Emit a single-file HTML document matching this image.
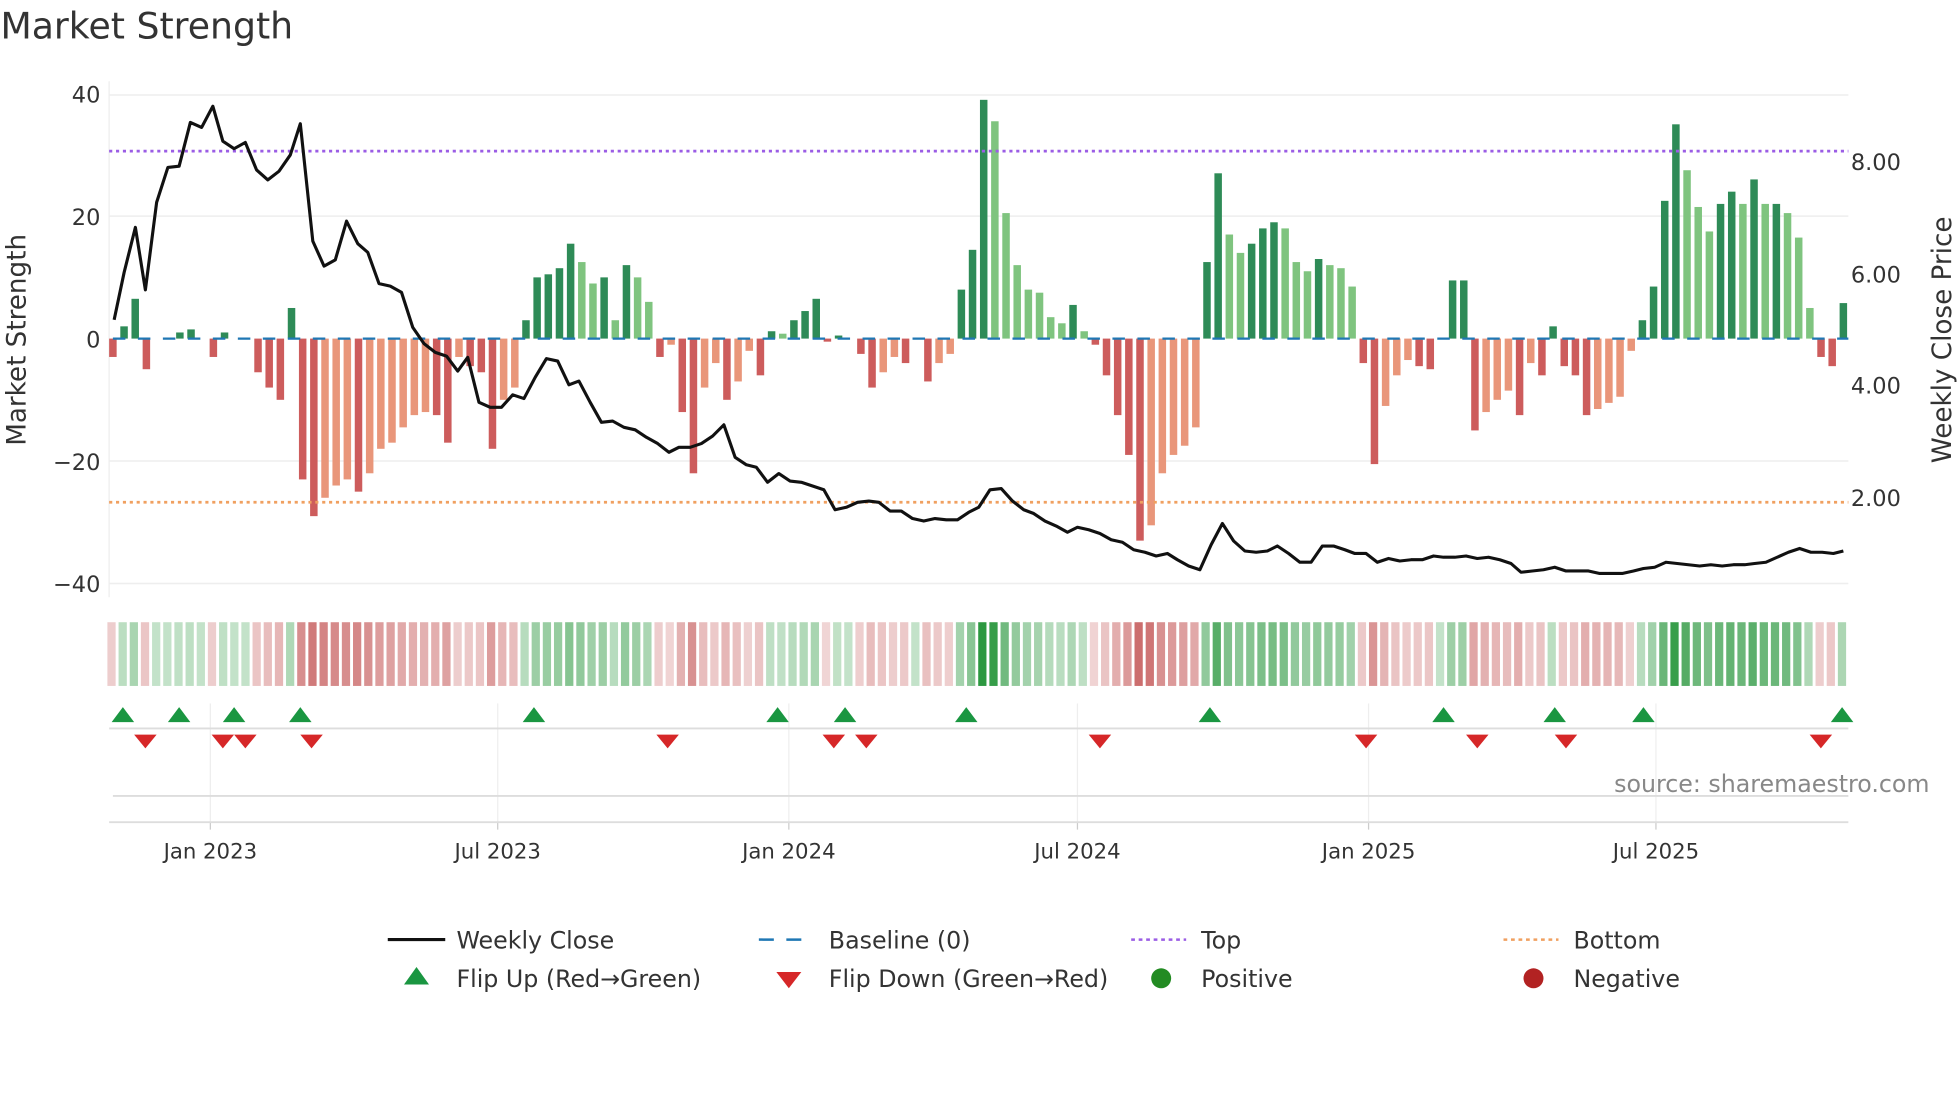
<!DOCTYPE html>
<html><head><meta charset="utf-8">
<style>
html,body{margin:0;padding:0;background:#fff;}
svg{display:block;font-family:"DejaVu Sans","Liberation Sans",sans-serif;}
</style></head>
<body>
<svg id="s" width="1960" height="1102" viewBox="0 0 1568 882" xmlns="http://www.w3.org/2000/svg">
<rect width="1568" height="882" fill="#fff"/>
<text x="0" y="31" font-size="29" fill="#333">Market Strength</text>
<g id="grid"></g>
<g id="heat"></g>
<g id="bars"></g>
<line x1="87" y1="121" x2="1479" y2="121" stroke="#9b5de5" stroke-width="2.2" stroke-dasharray="2.5,3"/>
<line x1="87" y1="402" x2="1479" y2="402" stroke="#f0a060" stroke-width="2.2" stroke-dasharray="2.5,3"/>
<polyline id="price" fill="none" stroke="#111" stroke-width="2.5" stroke-linejoin="round"/>
<g id="marks"></g>
<g font-size="18" fill="#333" text-anchor="end">
<text x="80" y="82">40</text><text x="80" y="180">20</text><text x="80" y="278">0</text>
<text x="80" y="376">−20</text><text x="80" y="474">−40</text>
</g>
<g font-size="18" fill="#333">
<text x="1481" y="136">8.00</text><text x="1481" y="226">6.00</text>
<text x="1481" y="315">4.00</text><text x="1481" y="405">2.00</text>
</g>
<text transform="translate(20,272) rotate(-90)" font-size="21" fill="#333" text-anchor="middle">Market Strength</text>
<text transform="translate(1561,272) rotate(-90)" font-size="21" fill="#333" text-anchor="middle">Weekly Close Price</text>
<g font-size="17" fill="#333" text-anchor="middle">
<text x="168" y="687">Jan 2023</text><text x="398" y="687">Jul 2023</text>
<text x="631" y="687">Jan 2024</text><text x="862" y="687">Jul 2024</text>
<text x="1095" y="687">Jan 2025</text><text x="1325" y="687">Jul 2025</text>
</g>
<text x="1544" y="634" font-size="19" fill="#888" text-anchor="end">source: sharemaestro.com</text>
<g font-size="19" fill="#333">
<line x1="310" y1="752" x2="356" y2="752" stroke="#111" stroke-width="2.5"/>
<text x="365" y="759">Weekly Close</text>
<line x1="607" y1="752" x2="651" y2="752" stroke="#1f77b4" stroke-width="2" stroke-dasharray="12,10"/>
<text x="663" y="759">Baseline (0)</text>
<line x1="905" y1="752" x2="949" y2="752" stroke="#9b5de5" stroke-width="2" stroke-dasharray="3,3"/>
<text x="961" y="759">Top</text>
<line x1="1203" y1="752" x2="1247" y2="752" stroke="#f0a060" stroke-width="2" stroke-dasharray="3,3"/>
<text x="1259" y="759">Bottom</text>
<polygon points="323,788 343,788 333,774" fill="#1a9641"/>
<text x="365" y="790">Flip Up (Red→Green)</text>
<polygon points="621,778 641,778 631,791" fill="#d62728"/>
<text x="663" y="790">Flip Down (Green→Red)</text>
<circle cx="929" cy="783" r="8" fill="#228b22"/>
<text x="961" y="790">Positive</text>
<circle cx="1227" cy="783" r="8" fill="#b22222"/>
<text x="1259" y="790">Negative</text>
</g>
</svg>
<script>
var NS="http://www.w3.org/2000/svg";
function el(p,t,a){var e=document.createElementNS(NS,t);for(var k in a)e.setAttribute(k,a[k]);document.getElementById(p).appendChild(e);return e;}
[76,173,369,467].forEach(function(y){el("grid","line",{x1:87,y1:y,x2:1479,y2:y,stroke:"#eee","stroke-width":1.2});});
el("grid","line",{x1:87,y1:65,x2:87,y2:478,stroke:"#eee","stroke-width":1});
[168,398,631,862,1095,1325].forEach(function(x){
 el("grid","line",{x1:x,y1:563,x2:x,y2:658,stroke:"#eee","stroke-width":1});
 el("grid","line",{x1:x,y1:658,x2:x,y2:664,stroke:"#ccc","stroke-width":1});
});
el("grid","line",{x1:87,y1:583,x2:1479,y2:583,stroke:"#ddd","stroke-width":1.5});
el("grid","line",{x1:90,y1:637,x2:1479,y2:637,stroke:"#ddd","stroke-width":1.5});
el("grid","line",{x1:87,y1:658,x2:1479,y2:658,stroke:"#ddd","stroke-width":1.5});
var v=[-3,2,6.5,-5,0,0,1,1.5,0,-3,1,0,0,-5.5,-8,-10,5,-23,-29,-26,-24,-23,-25,-22,-18,-17,-14.5,-12.5,-12,-12.5,-17,-3,-4.5,-5.5,-18,-10,-8,3,10,10.5,11.5,15.5,12.5,9,10,3,12,10,6,-3,-1,-12,-22,-8,-4,-10,-7,-2,-6,1.2,0.8,3,4.5,6.5,-0.5,0.5,0,-2.5,-8,-5.5,-3,-4,0,-7,-4,-2.5,8,14.5,39,35.5,20.5,12,8,7.5,3.5,2.5,5.5,1.2,-1,-6,-12.5,-19,-33,-30.5,-22,-19,-17.5,-14.5,12.5,27,17,14,15.5,18,19,18,12.5,11,13,12,11.5,8.5,-4,-20.5,-11,-6,-3.5,-4.5,-5,0,9.5,9.5,-15,-12,-10,-8.5,-12.5,-4,-6,2,-4.5,-6,-12.5,-11.5,-10.5,-9.5,-2,3,8.5,22.5,35,27.5,21.5,17.5,22,24,22,26,22,22,20.5,16.5,5,-3,-4.5,5.8];
var n=v.length,step=(1475-90)/(n-1),Y0=271,k=4.9;
for(var i=0;i<n;i++){
 var x=90+i*step,val=v[i],p=i?v[i-1]:0,c;
 if(val>=0)c=(val>=p)?"#2e8b57":"#7fc47f";else c=(val<=p)?"#cd5c5c":"#e9967a";
 var h=Math.abs(val)*k;
 if(h>0.3) el("bars","rect",{x:x-3,y:val>=0?Y0-h:Y0,width:6,height:h,fill:c});
 var a=Math.abs(val),hc;
 var t=Math.min(1,a/38);
 if(val>=0){hc="rgba(40,150,60,"+(0.28+0.7*t)+")";}else{hc="rgba(190,70,70,"+(0.22+0.65*t)+")";}
 el("heat","rect",{x:x-4.4,y:498,width:6.6,height:51,fill:hc});
}
el("bars","line",{x1:90,y1:271,x2:1479,y2:271,stroke:"#1f77b4","stroke-width":1.8,"stroke-dasharray":"10,10"});
var pts="91,256 99,218 108,182 116,232 125,162 134,134 143,133 152,98 161,102 170,85 178,113 187,119 196,114 205,136 214,144 223,137 232,124 240,99 250,193 259,213 268,208 277,177 286,195 294,202 303,227 312,229 321,234 330,262 339,275 348,282 357,285 366,297 374,286 383,322 392,326 401,326 410,316 419,319 428,302 437,287 446,289 455,308 463,305 472,322 481,338 490,337 499,342 508,344 517,350 526,355 535,362 543,358 552,358 561,355 570,349 579,340 588,366 597,372 605,374 614,386 623,379 632,385 641,386 650,389 659,392 668,408 677,406 686,402 695,401 703,402 712,409 721,409 730,415 739,417 748,415 757,416 766,416 775,410 783,406 792,392 801,391 810,401 819,408 827,411 836,417 845,421 854,426 862,422 871,424 880,427 889,432 898,434 907,440 916,442 925,445 934,443 942,448 951,453 960,456 969,436 978,419 987,433 996,441 1005,442 1014,441 1022,437 1031,443 1040,450 1049,450 1058,437 1067,437 1076,440 1084,443 1093,443 1102,450 1111,447 1120,449 1129,448 1138,448 1147,445 1155,446 1164,446 1173,445 1182,447 1191,446 1200,448 1209,451 1217,458 1226,457 1235,456 1244,454 1253,457 1262,457 1271,457 1280,459 1289,459 1298,459 1307,457 1315,455 1324,454 1333,450 1342,451 1351,452 1360,453 1369,452 1378,453 1387,452 1396,452 1404,451 1413,450 1422,446 1431,442 1440,439 1449,442 1458,442 1467,443 1475,441";
document.getElementById("price").setAttribute("points",pts);
[98,143,187,240,427,622,676,773,968,1155,1244,1315,1474].forEach(function(x){
 el("marks","polygon",{points:(x-9)+",578 "+(x+9)+",578 "+x+",566",fill:"#1a9641"});});
[116,178,196,249,534,667,693,880,1093,1182,1253,1457].forEach(function(x){
 el("marks","polygon",{points:(x-9)+",588 "+(x+9)+",588 "+x+",599",fill:"#d62728"});});
</script>
</body></html>
